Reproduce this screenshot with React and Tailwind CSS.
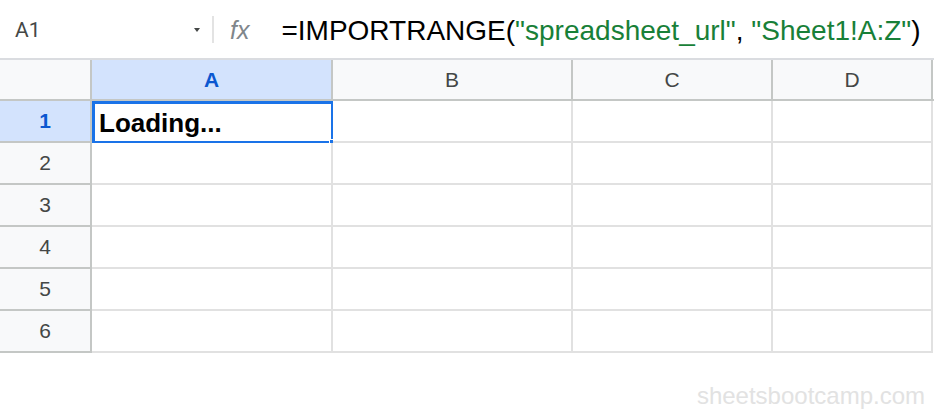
const COLS = [
  { key: 'A', w: 'w-[241px]' },
  { key: 'B', w: 'w-[240px]' },
  { key: 'C', w: 'w-[200px]' },
  { key: 'D', w: 'w-[160px]' },
];

const ROWS = [1, 2, 3, 4, 5, 6];

function FormulaBar() {
  return (
    <div className="h-[58px] flex items-center">
      <div className="w-[212px] flex items-center pl-[15px] pr-[12px] pt-[3px]">
        <span className="text-[21px] text-[#444746] font-['Roboto',sans-serif] leading-none">A1</span>
        <span className="flex-1" />
        <svg width="6" height="5" viewBox="0 0 6 5" className="-mt-[1px]">
          <path d="M0 0h6L3 4z" fill="#444746" />
        </svg>
      </div>
      <div className="w-[2px] h-[27px] bg-[#e3e3e3]" />
      <span className="ml-[16px] pt-[2px] text-[25px] italic text-[#80868b] leading-none font-['Liberation_Sans',sans-serif]">fx</span>
      <div className="ml-[32px] pt-[3px] text-[28px] leading-none text-black whitespace-nowrap">
        =IMPORTRANGE(<span className="text-[#188038]">"spreadsheet_url"</span>, <span className="text-[#188038]">"Sheet1!A:Z"</span>)
      </div>
    </div>
  );
}

function HeaderRow() {
  return (
    <div className="flex h-[43px] border-t-2 border-b-2 border-t-[#dadce0] border-b-[#c4c7c5]">
      <div className="w-[92px] bg-[#f8f9fa] border-r-2 border-[#c4c7c5]" />
      {COLS.map((c) => (
        <div
          key={c.key}
          className={`${c.w} border-r-2 border-[#c4c7c5] flex items-center justify-center text-[21px] ${
            c.key === 'A' ? 'bg-[#d3e3fd] text-[#0b57d0] font-bold' : 'bg-[#f8f9fa] text-[#444746]'
          }`}
        >
          {c.key}
        </div>
      ))}
    </div>
  );
}

function BodyRow({ n }) {
  const active = n === 1;
  return (
    <div className="flex h-[42px]">
      <div
        className={`w-[92px] border-r-2 border-b-2 border-[#c4c7c5] flex items-center justify-center text-[21px] ${
          active ? 'bg-[#d3e3fd] text-[#0b57d0] font-bold' : 'bg-[#f8f9fa] text-[#444746]'
        }`}
      >
        {n}
      </div>
      {COLS.map((c) => (
        <div key={c.key} className={`${c.w} relative border-r-2 border-b-2 border-[#e1e1e1] bg-white flex items-center`}>
          {active && c.key === 'A' && (
            <>
              <span className="pl-[7px] pt-[3px] text-[26px] font-bold text-black leading-none">Loading...</span>
              <div className="absolute left-0 top-0 w-[242px] h-[43px] border-[3px] border-[#1a73e8]">
                <div className="absolute -right-[4px] -bottom-[4px] w-[6px] h-[6px] bg-[#1a73e8] border border-white" />
              </div>
            </>
          )}
        </div>
      ))}
    </div>
  );
}

export default function App() {
  return (
    <div className="w-[934px] h-[414px] bg-white overflow-hidden font-['Liberation_Sans',Arial,sans-serif]">
      <FormulaBar />
      <HeaderRow />
      {ROWS.map((n) => (
        <BodyRow key={n} n={n} />
      ))}
      <div className="flex justify-end pr-[9px] pt-[31px]">
        <span className="text-[24px] leading-none text-[#e2e2e2]">sheetsbootcamp.com</span>
      </div>
    </div>
  );
}
